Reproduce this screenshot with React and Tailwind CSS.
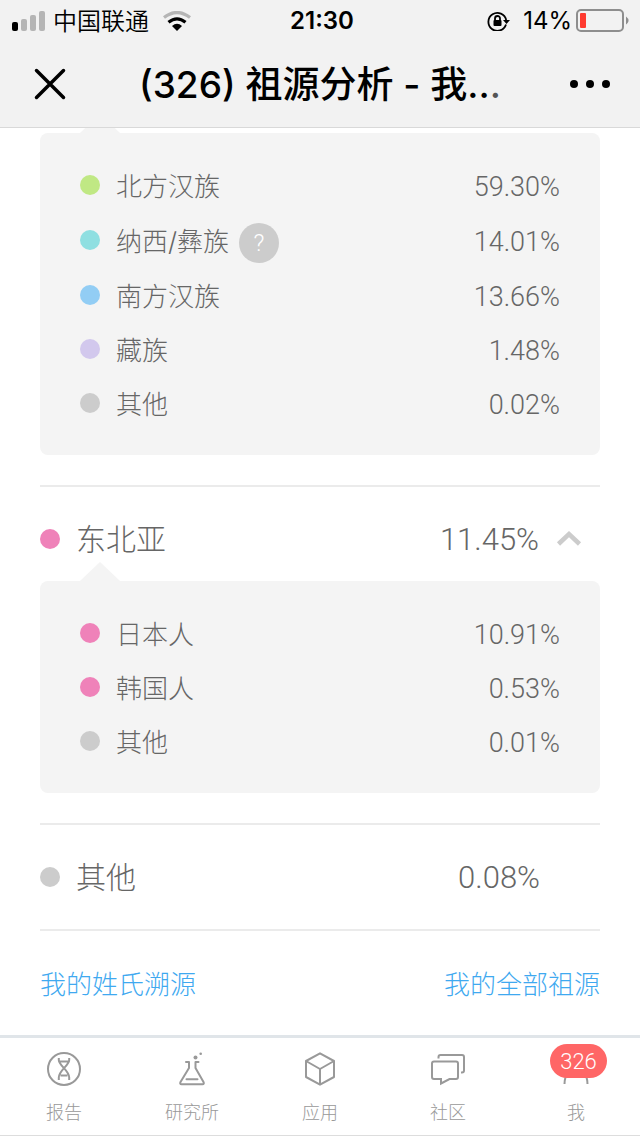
import { clsx } from "clsx";

const southEast = [
  { name: "北方汉族", value: "59.30%", color: "bg-[#c0e884]" },
  { name: "纳西/彝族", value: "14.01%", color: "bg-[#8fdfe1]", help: true },
  { name: "南方汉族", value: "13.66%", color: "bg-[#92cdf4]" },
  { name: "藏族", value: "1.48%", color: "bg-[#d2c8ed]" },
  { name: "其他", value: "0.02%", color: "bg-[#cccccc]" },
];

const northEast = [
  { name: "日本人", value: "10.91%", color: "bg-[#ef82b9]" },
  { name: "韩国人", value: "0.53%", color: "bg-[#ef82b9]" },
  { name: "其他", value: "0.01%", color: "bg-[#cccccc]" },
];

const tabs = [
  { name: "报告", href: "#report", icon: ReportIcon },
  { name: "研究所", href: "#lab", icon: LabIcon },
  { name: "应用", href: "#apps", icon: BoxIcon },
  { name: "社区", href: "#community", icon: ChatIcon },
  { name: "我", href: "#me", icon: MeIcon, badge: "326" },
];

function ReportIcon() {
  return (
    <svg className="size-9" viewBox="0 0 36 36" fill="none" stroke="currentColor" strokeWidth="2">
      <circle cx="18" cy="18" r="16" />
      <path d="M12.800 7v2c0 5.500 10.400 10.500 10.400 17.500V29M23.200 7v2c0 5.500-10.400 10.500-10.400 17.500V29M13.500 10.500h9M14.500 24.500h7" />
    </svg>
  );
}

function LabIcon() {
  return (
    <svg className="size-9" viewBox="0 0 36 36" fill="none" stroke="currentColor" strokeWidth="2" strokeLinecap="round" strokeLinejoin="round">
      <path d="M12 11h3v6L6.500 31q-1 2.300 1 2.300h21q2 0 1-2.300L21.500 17v-6h3M12.500 28.300h11" />
      <circle cx="21.500" cy="6.500" r="2" fill="currentColor" stroke="none" />
      <circle cx="26.700" cy="2.800" r="1.300" fill="currentColor" stroke="none" />
    </svg>
  );
}

function BoxIcon() {
  return (
    <svg className="size-9" viewBox="0 0 36 36" fill="none" stroke="currentColor" strokeWidth="2" strokeLinejoin="round">
      <path d="M18 2.300l14 7.700v16L18 33.700 4 26V10zM4 10l14 8 14-8M18 18v15.500" />
    </svg>
  );
}

function ChatIcon() {
  return (
    <svg className="size-9" viewBox="0 0 36 36" fill="none" stroke="currentColor" strokeWidth="2">
      <path d="M8.500 7.500V6q0-2 2-2H32q2 0 2 2v13.500q0 2-2 2h-1" />
      <path d="M4 10.500h22q2 0 2 2V26q0 2-2 2h-6.500L11 32.500V28H4q-2 0-2-2V12.500q0-2 2-2z" />
    </svg>
  );
}

function MeIcon() {
  return (
    <svg className="size-9" viewBox="0 0 36 36" fill="none" stroke="currentColor" strokeWidth="2">
      <circle cx="18" cy="10" r="7" />
      <path d="M6.500 33c0-20 23-20 23 0" />
    </svg>
  );
}

function StatusBar() {
  return (
    <div className="grid h-10 grid-cols-3 items-center pt-0.5 pr-2 pl-3 text-2xl">
      <div className="flex items-center gap-2">
        <svg className="h-5 w-[33px] shrink-0" viewBox="0 0 33 20">
          <rect y="11" width="6" height="9" rx="2" />
          <rect x="9" y="8" width="6" height="12" rx="2" fill="#b5b5b5" />
          <rect x="18" y="4" width="6" height="16" rx="2" fill="#b5b5b5" />
          <rect x="27" width="6" height="20" rx="2" fill="#b5b5b5" />
        </svg>
        <span className="pt-0.5 font-[350] whitespace-nowrap">中国联通</span>
        <svg className="ml-1.5 h-5 w-7 shrink-0" viewBox="0 0 28 20" fill="none" strokeWidth="3.200">
          <path d="M1 6.500Q14-3.500 27 6.500" stroke="#b5b5b5" />
          <path d="M5.500 11.300q8.500-7 17 0" stroke="#000" />
          <path d="M9 15q5-4.500 10 0l-5 5z" fill="#000" />
        </svg>
      </div>
      <time className="text-center font-semibold">21:30</time>
      <div className="flex items-center justify-end">
        <svg className="mr-3 h-5 w-6" viewBox="0 0 24 20" fill="none" stroke="#000" strokeWidth="1.800">
          <path d="M19 13.500A9 9 0 1 1 19.200 9" />
          <path d="M16 9h7l-3.500 4z" fill="#000" stroke="none" />
          <rect x="6.500" y="9" width="8" height="6" rx="1" fill="#000" stroke="none" />
          <path d="M8 9.500V7.500a2.500 2.500 0 0 1 5 0v2" />
        </svg>
        <span>14%</span>
        <svg className="ml-1 h-6 w-14" viewBox="0 0 56 24">
          <rect x="1" y="1" width="46" height="21" rx="4" fill="none" stroke="#8e8e8e" strokeWidth="2" />
          <rect x="4" y="4" width="6" height="15" rx="1" fill="#ff3b30" />
          <path d="M50 7.500q5 4 0 8z" fill="#8e8e8e" />
        </svg>
      </div>
    </div>
  );
}

function Dot({ color }) {
  return <span className={clsx("size-5 shrink-0 rounded-full", color)} />;
}

function Panel({ items }) {
  return (
    <div className="relative rounded-lg bg-[#f4f4f4] px-10 py-[25px]">
      <svg className="absolute -top-5 left-10 h-5 w-10 text-[#f4f4f4]" viewBox="0 0 40 20" fill="currentColor">
        <path d="M0 20L20 1l20 19z" />
      </svg>
      <ul>
        {items.map((item) => (
          <li key={item.name} className={clsx("flex items-center text-[26px]", item.help ? "h-14" : "h-[54px]")}>
            <Dot color={item.color} />
            <span className="ml-4 pt-0.5">{item.name}</span>
            {item.help && (
              <button className="mt-1.5 ml-2.5 size-10 rounded-full bg-[#cccccc] font-[Roboto] text-2xl font-light text-white">
                ?
              </button>
            )}
            <span className="ml-auto pt-1 font-[Roboto] text-[27px]">{item.value}</span>
          </li>
        ))}
      </ul>
    </div>
  );
}

export default function App() {
  return (
    <div className="min-h-screen bg-white font-['Inter','Noto_Sans_CJK_SC',sans-serif] text-black">
      <header className="sticky top-0 z-10 border-b border-[#d9d9d9] bg-[#f2f2f2]">
        <StatusBar />
        <div className="flex h-[87px] items-center justify-between px-[30px]">
          <button aria-label="关闭" className="p-1">
            <svg className="size-8" viewBox="0 0 32 32" stroke="#000" strokeWidth="3.500" strokeLinecap="round">
              <path d="M2.500 2.500l27 27M29.500 2.500l-27 27" />
            </svg>
          </button>
          <h1 className="pt-0.5 text-[37px] font-medium whitespace-nowrap">
            (326) 祖源分析 - 我..<span className="text-[#555555]">.</span>
          </h1>
          <button aria-label="更多">
            <svg className="h-10 w-10" viewBox="0 0 40 40">
              <circle cx="4" cy="20" r="4" />
              <circle cx="20" cy="20" r="4" />
              <circle cx="36" cy="20" r="4" />
            </svg>
          </button>
        </div>
      </header>

      <main className="px-10 pt-[5px] font-light text-[#666666]">
        <Panel items={southEast} />

        <section className="mt-[30px] border-t-2 border-[#ebebeb]">
          <div className="flex h-[94px] items-center pt-2.5 text-3xl">
            <Dot color="bg-[#ef82b9]" />
            <h2 className="ml-4">东北亚</h2>
            <span className="ml-auto pt-0.5 font-[Roboto] text-[31px]">11.45%</span>
            <button aria-label="收起" className="mr-[17px] ml-4">
              <svg className="h-6 w-7" viewBox="0 0 28 24" fill="none" stroke="#cccccc" strokeWidth="4.500">
                <path d="M3.500 17L14 7l10.500 10" />
              </svg>
            </button>
          </div>
          <Panel items={northEast} />
        </section>

        <section className="mt-[30px] border-y-2 border-[#ebebeb]">
          <div className="flex h-[104px] items-center pr-[60px] text-3xl">
            <Dot color="bg-[#cccccc]" />
            <h2 className="ml-4">其他</h2>
            <span className="ml-auto pt-0.5 font-[Roboto] text-[31px]">0.08%</span>
          </div>
        </section>

        <div className="flex h-[104px] items-center justify-between pt-0.5 text-[26px] text-[#3fa9f0]">
          <a href="#surname">我的姓氏溯源</a>
          <a href="#all">我的全部祖源</a>
        </div>
      </main>

      <nav className="sticky bottom-0 grid grid-cols-5 border-t-[3px] border-b border-t-[#e0e5e9] border-b-[#dddddd] bg-white">
        {tabs.map((tab) => {
          const Icon = tab.icon;
          return (
            <a key={tab.name} href={tab.href} className="flex h-[97px] flex-col items-center pt-[13px] text-[#999999]">
              <span className="relative">
                <Icon />
                {tab.badge && (
                  <span className="absolute -top-[7px] -left-2 flex h-[34px] w-[57px] items-center justify-center rounded-full bg-[#ff6666] font-[Roboto] text-[22px] font-light text-white">
                    {tab.badge}
                  </span>
                )}
              </span>
              <span className="mt-3 text-lg font-light">{tab.name}</span>
            </a>
          );
        })}
      </nav>
    </div>
  );
}
